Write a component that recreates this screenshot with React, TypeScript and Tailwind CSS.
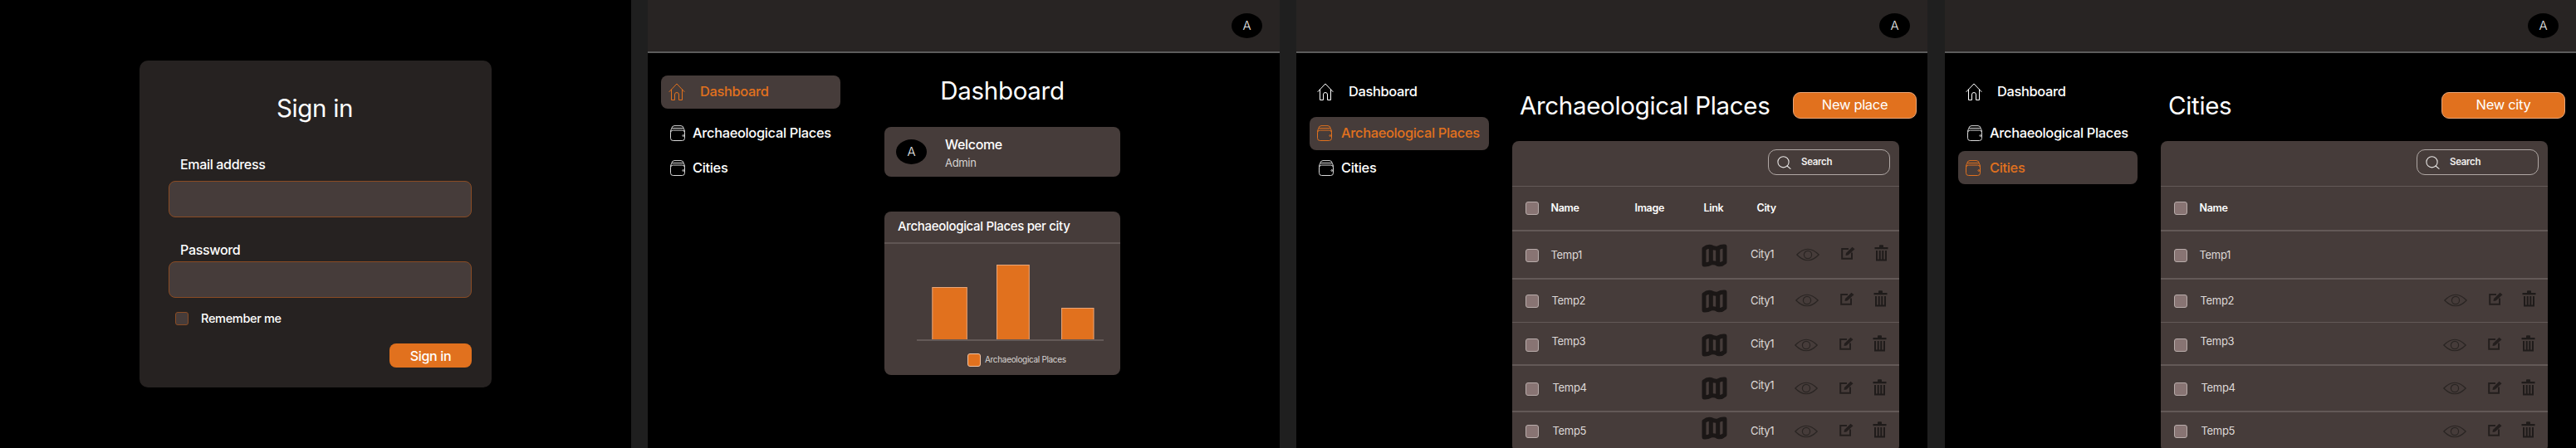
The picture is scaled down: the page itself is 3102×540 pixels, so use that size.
import React from "react";

const HouseIcon = ({ className }: { className: string }) => (
  <svg viewBox="0 0 20 21" fill="none" stroke="currentColor" strokeWidth="1" className={className}>
    <path d="M1 10.5 L10 1 L19 10.5 M3.5 8 V20.5 H7.5 V14 Q7.5 11.5 10 11.5 Q12.5 11.5 12.5 14 V20.5 H16.5 V8" strokeLinejoin="round" strokeLinecap="round" />
  </svg>
);

const StackIcon = ({ className }: { className: string }) => (
  <svg viewBox="0 0 18 19" fill="none" stroke="currentColor" strokeWidth="1" className={className}>
    <rect x="0.5" y="6" width="17" height="12.5" rx="3" />
    <path d="M0.5 8 Q0.5 3.5 4 3.5 H14 Q17.5 3.5 17.5 8" />
    <path d="M1.5 4.5 Q2 0.6 5 0.6 H13 Q16 0.6 16.5 4.5" />
    <circle cx="15.8" cy="12.5" r="0.9" />
  </svg>
);

const MapIcon = () => (
  <svg viewBox="0 0 31 28" fill="none" stroke="#1b1716" strokeWidth="5" strokeLinejoin="round" className="w-[31px] h-[28px]">
    <path d="M3 6 Q7 2.5 11.3 3.5 Q15.5 6 19.7 5 Q24 2.5 28 3 V22 Q24 25.5 19.7 24.5 Q15.5 22 11.3 23 Q7 25.5 3 25 Z" />
    <path d="M11.3 3.5 V23 M19.7 5 V24.5" />
  </svg>
);

const EyeIcon = () => (
  <svg viewBox="0 0 28 16" fill="none" stroke="#2a2523" strokeWidth="1.2" className="w-[28px] h-[16px]">
    <path d="M0.8 8 Q14 -5.5 27.2 8 Q14 21.5 0.8 8 Z" />
    <circle cx="14" cy="8" r="4.6" />
  </svg>
);

const EditIcon = () => (
  <svg viewBox="0 0 17 16" className="w-[17px] h-[16px]">
    <path d="M9 3 H1.2 V14.8 H13 V7.5" fill="none" stroke="#231e1d" strokeWidth="2" />
    <path d="M5.5 11 L6 8 L13.5 0.8 L16.5 3.2 L8.5 10.6 Z" fill="#231e1d" />
  </svg>
);

const TrashIcon = () => (
  <svg viewBox="0 0 17 20" className="w-[17px] h-[20px]">
    <path d="M6 3 V1 Q6 0.3 7 0.3 H10 Q11 0.3 11 1 V3 H16.5 V5.2 H0.5 V3 Z" fill="#1f1b1a" />
    <path d="M3 7 V18.6 H14 V7 M6.7 7 V18 M10.3 7 V18" fill="none" stroke="#1f1b1a" strokeWidth="2" />
  </svg>
);

const SearchIcon = () => (
  <svg viewBox="0 0 17 16" fill="none" stroke="#e8e6e5" strokeWidth="1.1" className="w-[17px] h-[16px]">
    <circle cx="7.5" cy="7.3" r="6.6" />
    <path d="M12 12 L16 15.4" strokeLinecap="round" />
  </svg>
);

const Avatar = () => (
  <div className="w-[37px] h-[30px] rounded-[50%] bg-black flex items-center justify-center text-[15px] font-light text-[#e8e8e8]">A</div>
);

const NavItem = ({ label, active, home }: { label: string; active: boolean; home?: boolean }) => {
  const box = active ? "bg-[#463c3a] text-[#e1711e]" : "text-white";
  let icon;
  if (home) icon = <HouseIcon className="w-[20px] h-[21px] ml-[9px] mr-[18px] shrink-0" />;
  else if (active) icon = <StackIcon className="w-[18px] h-[19px] ml-[9px] mr-[11px] shrink-0" />;
  else icon = <StackIcon className="w-[18px] h-[19px] ml-[11px] mr-[9px] shrink-0 text-[#d8d8d8]" />;
  return (
    <div className={`flex items-center h-[40px] w-[216px] rounded-lg text-[16.4px] font-medium ${box}`}>
      {icon}
      <span>{label}</span>
    </div>
  );
};

const Shell = ({ active, width, children }: { active: number; width: string; children: React.ReactNode }) => (
  <div className={`${width} h-[540px] bg-black overflow-hidden shrink-0 flex flex-col`}>
    <header className="h-[64px] shrink-0 bg-[#282423] border-b-2 border-[#5c5c5c] flex items-center justify-end pr-[21px]">
      <Avatar />
    </header>
    <div className="flex pt-[26.5px] pl-[16px]">
      <nav className="w-[216px] shrink-0 flex flex-col">
        <NavItem label="Dashboard" active={active === 0} home />
        <div className="mt-[10px]"><NavItem label="Archaeological Places" active={active === 1} /></div>
        <div className="mt-[1.5px]"><NavItem label="Cities" active={active === 2} /></div>
      </nav>
      {children}
    </div>
  </div>
);

const Check = ({ cls }: { cls?: string }) => (
  <div className={`w-[16px] h-[16px] rounded-[3px] bg-[#887473] border border-[#b8acaa] ${cls ?? ""}`} />
);

const rows = [
  { name: "Temp1", top: "h-[58px] border-t-2", check: "mt-[1px]", temp: "mt-[1px]", map: "mt-[2px]", city: "mb-[1px]", eye: "mb-[1px]", edit: "mb-[4px]", trash: "mb-[5px]", x: "", tx: "" },
  { name: "Temp2", top: "h-[53px] border-t-2", check: "", temp: "", map: "", city: "", eye: "mb-[2px]", edit: "mb-[6px]", trash: "mb-[5px]", x: "ml-[-1px]", tx: "ml-[1px]" },
  { name: "Temp3", top: "h-[51px] border-t", check: "mt-[4px]", temp: "mb-[5px]", map: "mt-[3px]", city: "mt-[2px]", eye: "mt-[4px]", edit: "", trash: "", x: "ml-[-2px]", tx: "ml-[1px]" },
  { name: "Temp4", top: "h-[56px] border-t-2", check: "mt-[1px]", temp: "", map: "", city: "mb-[6px]", eye: "", edit: "mb-[3px]", trash: "mb-[2px]", x: "ml-[-2px]", tx: "ml-[2px]" },
  { name: "Temp5", top: "h-[50px] border-t-2", check: "mb-[2px]", temp: "mb-[3px]", map: "mb-[10px]", city: "mb-[3px]", eye: "mb-[3px]", edit: "mb-[7px]", trash: "mb-[7px]", x: "ml-[-2px]", tx: "ml-[2px]" },
];

const Table = ({ places }: { places: boolean }) => (
  <div className="w-[466px] mt-[27.5px] ml-[-9px] bg-[#463c3a] rounded-lg overflow-hidden">
    <div className="h-[54px] flex justify-end items-start pt-[10px] pr-[11px]">
      <div className="w-[147px] h-[31px] border border-[#b0a8a5] rounded-[10px] flex items-center pl-[10px]">
        <SearchIcon />
        <span className="ml-[12px] text-[11.5px] font-semibold text-[#f2f0ef]">Search</span>
      </div>
    </div>
    <div className="h-[53px] border-t border-[#635957] grid grid-cols-[31px_101px_83px_64px_1fr] items-center pl-[15.5px] text-[12.5px] font-semibold text-white">
      <Check />
      <div>Name</div>
      {places && <div>Image</div>}
      {places && <div>Link</div>}
      {places && <div>City</div>}
    </div>
    {rows.map((r, i) => (
      <div key={r.name} className={`${r.top} border-[#635957] grid grid-cols-[31px_181.5px_59px_55px_54px_40px_1fr] items-center pl-[15.5px] text-[13px] text-[#dedad8]`}>
        <Check cls={r.check} />
        <div className={`${r.temp} ${r.tx}`}>{r.name}</div>
        <div className={r.map}>{places && <MapIcon />}</div>
        <div className={r.city}>{places && "City1"}</div>
        {(places || i > 0) ? (
          <>
            <div className={`${r.eye} ${r.x}`}><EyeIcon /></div>
            <div className={`${r.edit} ${r.x}`}><EditIcon /></div>
            <div className={`${r.trash} ${r.x}`}><TrashIcon /></div>
          </>
        ) : null}
      </div>
    ))}
  </div>
);

const ListMain = ({ title, button, places }: { title: string; button: string; places: boolean }) => (
  <main className="ml-[28px] w-[487px] shrink-0 pt-[20.5px] pl-[9px]">
    <div className="flex items-center justify-between h-[31.5px]">
      <h1 className="text-[29.5px] font-normal text-white whitespace-nowrap">{title}</h1>
      <button className="w-[149px] h-[31.5px] rounded-[9px] bg-[#e1711e] border border-[#e9a678] text-[16.5px] text-white">{button}</button>
    </div>
    <Table places={places} />
  </main>
);

const DashboardMain = () => (
  <main className="ml-[53px] w-[284px] shrink-0">
    <h1 className="h-[36px] leading-[36px] text-center text-[29.5px] font-normal text-white">Dashboard</h1>
    <div className="mt-[26.5px] h-[59.5px] rounded-lg bg-[#463c3a] flex items-center pl-[14px]">
      <Avatar />
      <div className="ml-[22px] mt-[3px] flex flex-col">
        <span className="text-[16px] leading-[20px] font-medium text-white">Welcome</span>
        <span className="text-[13px] leading-[18px] mt-[3px] text-[#d8d4d2]">Admin</span>
      </div>
    </div>
    <div className="mt-[42px] h-[197px] rounded-lg bg-[#463c3a] overflow-hidden">
      <div className="h-[39px] border-b-2 border-[#5f5553] pl-[16px] flex items-center text-[15px] font-medium text-white">Archaeological Places per city</div>
      <svg viewBox="0 0 225 92" className="w-[225px] h-[92px] ml-[39px] mt-[25px]">
        <rect x="18.8" y="27.5" width="41.5" height="63.5" fill="#e1711e" stroke="#e9a678" strokeWidth="1" />
        <rect x="96.5" y="0.5" width="38.8" height="90.5" fill="#e1711e" stroke="#e9a678" strokeWidth="1" />
        <rect x="174.5" y="52.5" width="38.5" height="38.5" fill="#e1711e" stroke="#e9a678" strokeWidth="1" />
        <rect x="0" y="90" width="225" height="2" fill="#635957" />
      </svg>
      <div className="flex items-center ml-[100px] mt-[15px]">
        <div className="w-[16px] h-[16px] rounded-[3px] bg-[#e1711e] border border-[#eec3a5]" />
        <span className="ml-[5px] text-[10px] text-[#d8d4d2] whitespace-nowrap">Archaeological Places</span>
      </div>
    </div>
  </main>
);

const SignIn = () => (
  <div className="w-[760px] h-[540px] bg-black shrink-0 pl-[168px] pt-[73px]">
    <div className="w-[424px] h-[394px] bg-[#262221] rounded-[10px] flex flex-col items-start pt-[37px]">
      <h1 className="w-full h-[40px] leading-[40px] text-center pr-[2px] text-[29.5px] font-normal text-white">Sign in</h1>
      <label className="ml-[49px] mt-[38px] h-[20px] leading-[20px] text-[16px] font-medium text-white">Email address</label>
      <input className="ml-[35px] mt-[10px] w-[365px] h-[44px] rounded-lg bg-[#463c3a] border border-[#8a4c24]" />
      <label className="ml-[49px] mt-[29px] h-[20px] leading-[20px] text-[16px] font-medium text-white">Password</label>
      <input className="ml-[35px] mt-[4px] w-[365px] h-[44px] rounded-lg bg-[#463c3a] border border-[#8a4c24]" />
      <div className="ml-[43px] mt-[17px] h-[16px] flex items-center">
        <div className="w-[16px] h-[16px] rounded-[3px] bg-[#463c3a] border border-[#8a4c24]" />
        <span className="ml-[15px] text-[14.5px] font-medium text-white">Remember me</span>
      </div>
      <button className="ml-[301px] mt-[22px] w-[99px] h-[29px] rounded-lg bg-[#e1711e] text-[16px] font-medium text-white">Sign in</button>
    </div>
  </div>
);

export default function App() {
  return (
    <div className="w-[3102px] h-[540px] bg-[#1f1f1f] flex overflow-hidden tracking-[-0.02em] font-['Inter',sans-serif]">
      <SignIn />
      <div className="ml-[20px]">
        <Shell active={0} width="w-[761px]"><DashboardMain /></Shell>
      </div>
      <div className="ml-[20px]">
        <Shell active={1} width="w-[760px]"><ListMain title="Archaeological Places" button="New place" places /></Shell>
      </div>
      <div className="ml-[21px]">
        <Shell active={2} width="w-[760px]"><ListMain title="Cities" button="New city" places={false} /></Shell>
      </div>
    </div>
  );
}
